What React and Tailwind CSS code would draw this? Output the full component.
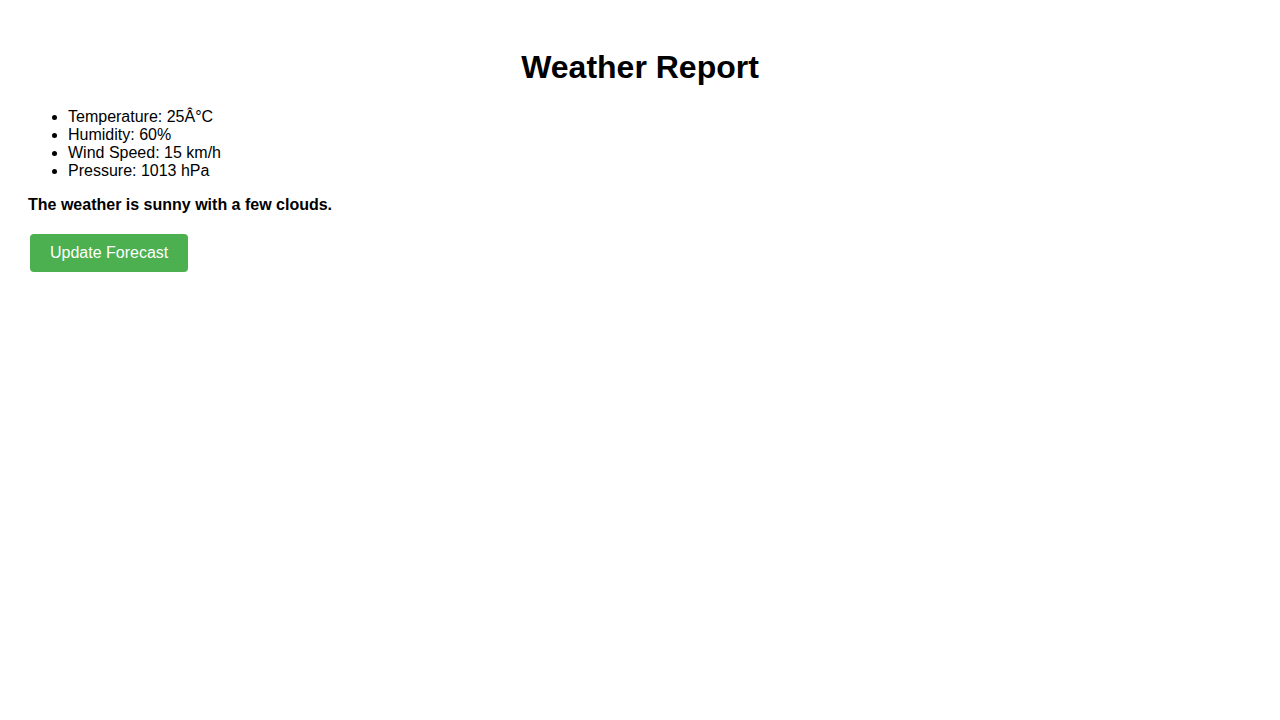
import React from 'react';

const stats = [
  'Temperature: 25Â°C',
  'Humidity: 60%',
  'Wind Speed: 15 km/h',
  'Pressure: 1013 hPa',
];

export default function App() {
  return (
    <div className="min-h-screen bg-white p-[28px] font-['Liberation_Sans',Arial,sans-serif] text-black text-[16px] leading-[18.4px]">
      <h1 className="mt-[21.44px] mb-[21.44px] text-center text-[32px] leading-[37px] font-bold">Weather Report</h1>
      <ul className="list-disc pl-[40px] mb-[16px] leading-[18px]">
        {stats.map(s => <li key={s}>{s}</li>)}
      </ul>
      <p className="font-bold">The weather is sunny with a few clouds.</p>
      <button className="mt-[20px] ml-[2px] bg-[#4caf50] text-white px-[20px] py-[10px] rounded-[4px] leading-[18px]">Update Forecast</button>
    </div>
  );
}
